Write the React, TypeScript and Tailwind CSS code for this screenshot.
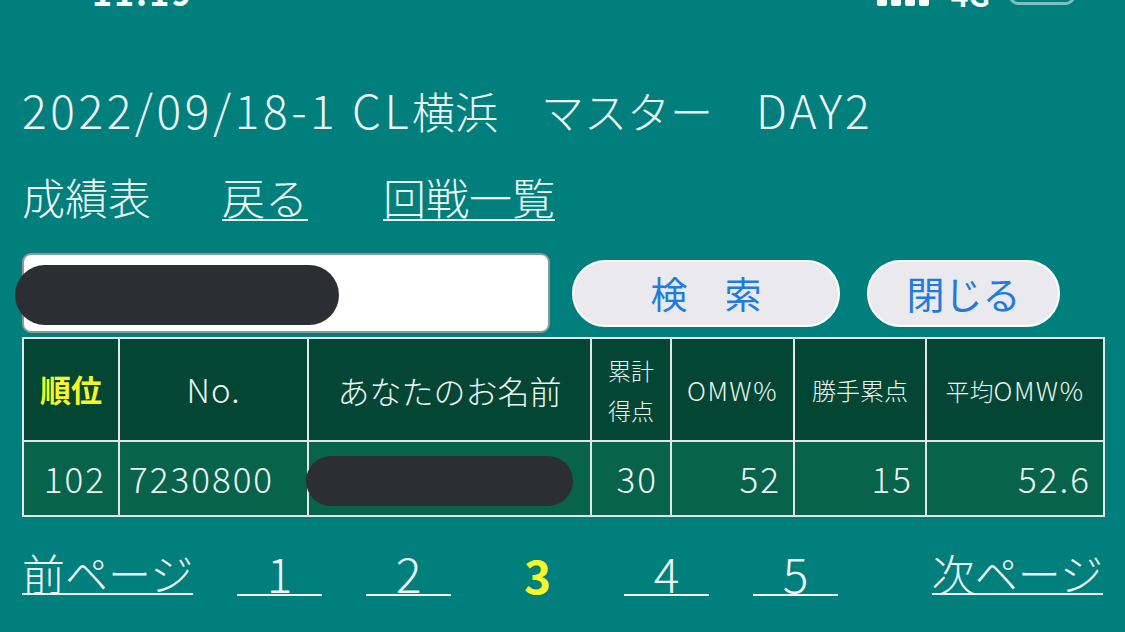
import React from 'react';

const font = { fontFamily: '"Noto Sans CJK JP", "Noto Sans", sans-serif' };

function StatusBar() {
  return (
    <div className="h-[8px] overflow-hidden">
      <div className="flex items-end h-[8px] pl-[92px] pr-[50px]">
        <span className="text-white font-bold text-[34px] tracking-[2px] leading-none translate-y-[1px]">11:19</span>
        <div className="ml-auto flex items-end gap-[4px] translate-y-[-2px]">
          <span className="w-[10px] h-[14px] bg-white rounded-[2px]" />
          <span className="w-[10px] h-[18px] bg-white rounded-[2px]" />
          <span className="w-[10px] h-[22px] bg-white rounded-[2px]" />
          <span className="w-[10px] h-[26px] bg-white rounded-[2px]" />
        </div>
        <span className="ml-[22px] text-white font-bold text-[30px] leading-none translate-y-[1px]">4G</span>
        <span className="ml-[19px] w-[66px] h-[30px] border-[3px] border-white/50 rounded-[9px] translate-y-[-3px]" />
      </div>
    </div>
  );
}

function Pill({ className }: { className: string }) {
  return <div className={`absolute bg-[#2b2f33] rounded-full ${className}`} />;
}

export default function App() {
  const th = 'border-2 border-[#e2e6e6] bg-[#024633] text-[#eef4f2] font-light text-center align-middle';
  const td = 'border-2 border-[#e2e6e6] bg-[#07634a] text-[#eef4f2] font-light text-[35px] tracking-[2px] text-right pr-[12px] align-middle';
  const num = 'w-[85px] text-center border-b-2 border-[#eef4f2] text-[48px] leading-[44px]';
  return (
    <div className="w-[1125px] h-[632px] bg-[#017f7d] text-[#eef4f2] overflow-hidden" style={font}>
      <StatusBar />
      <div className="px-[22px]">
        <h1 className="mt-[76px] text-[43px] leading-[50px] font-light whitespace-pre">
          <span className="text-[46px] tracking-[3.6px]">2022/09/18-1 CL</span>横浜　マスター　<span className="text-[46px] tracking-[3px]">DAY2</span>
        </h1>
        <div className="mt-[36px] flex text-[43px] leading-[50px] font-light">
          <span>成績表</span>
          <a className="ml-[71px] underline decoration-2 underline-offset-[4px]">戻る</a>
          <a className="ml-[75px] underline decoration-2 underline-offset-[4px]">回戦一覧</a>
        </div>

        <div className="mt-[32px] flex items-center">
          <div className="relative w-[528px] h-[80px] bg-white border-2 border-[#8e979a] rounded-[9px]">
            <Pill className="left-[-9px] top-[10px] w-[324px] h-[60px]" />
          </div>
          <button className="ml-[22px] w-[268px] h-[67px] rounded-full bg-[#e9e9ee] border-2 border-white text-[#1f7be0] text-[37px] leading-none">
            検　索
          </button>
          <button className="ml-[27px] w-[193px] h-[67px] rounded-full bg-[#e9e9ee] border-2 border-white text-[#1f7be0] text-[38px] leading-none">
            閉じる
          </button>
        </div>

        <table className="mt-[4px] border-collapse w-[1081px] table-fixed">
          <colgroup>
            <col className="w-[96px]" />
            <col className="w-[189px]" />
            <col className="w-[283px]" />
            <col className="w-[80px]" />
            <col className="w-[123px]" />
            <col className="w-[132px]" />
            <col className="w-[178px]" />
          </colgroup>
          <thead>
            <tr className="h-[103px]">
              <th className={`${th} !font-bold text-[31px] text-[#f6f628]`}>順位</th>
              <th className={`${th} text-[33px] tracking-[1px]`}>No.</th>
              <th className={`${th} text-[32px]`}>あなたのお名前</th>
              <th className={`${th} text-[23px] leading-[40px]`}>累計<br />得点</th>
              <th className={`${th} text-[26px] tracking-[1.5px]`}>OMW%</th>
              <th className={`${th} text-[24px]`}>勝手累点</th>
              <th className={`${th} text-[24px]`}>
                平均<span className="text-[26px] tracking-[1.5px]">OMW%</span>
              </th>
            </tr>
          </thead>
          <tbody>
            <tr className="h-[75px]">
              <td className={td}>102</td>
              <td className={`${td} !text-left pl-[9px]`}>7230800</td>
              <td className={`${td} relative`}>
                <Pill className="left-[-3px] top-[14px] w-[267px] h-[50px]" />
              </td>
              <td className={td}>30</td>
              <td className={td}>52</td>
              <td className={td}>15</td>
              <td className={td}>52.6</td>
            </tr>
          </tbody>
        </table>

        <div className="mt-[31px] flex items-end gap-[44px] text-[43px] leading-[48px] font-light">
          <a className="underline decoration-2 underline-offset-[2px]">前ページ</a>
          {['1', '2'].map((n) => (
            <a key={n} className={num}>{n}</a>
          ))}
          <span className="w-[85px] text-center font-bold text-[#f6f628] text-[46px] leading-[44px]">3</span>
          {['4', '5'].map((n) => (
            <a key={n} className={num}>{n}</a>
          ))}
          <a className="ml-auto underline decoration-2 underline-offset-[2px]">次ページ</a>
        </div>
      </div>
    </div>
  );
}
